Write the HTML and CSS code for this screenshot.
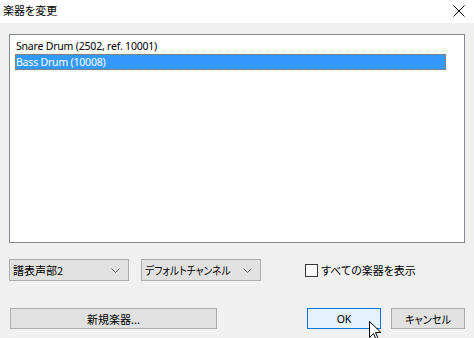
FILE: index.html
```html
<!DOCTYPE html>
<html lang="ja">
<head>
<meta charset="utf-8">
<link rel="stylesheet" href="styles.css">
</head>
<body>
<div class="dialog">
  <div class="titlebar">
    <span class="title">楽器を変更</span>
    <svg class="close" width="12" height="12" viewBox="0 0 12 12"><path d="M0.5 0.5 L11.5 11.5 M11.5 0.5 L0.5 11.5" stroke="#000" stroke-width="1" fill="none"/></svg>
  </div>
  <div class="body">
    <div class="listbox">
      <div class="item">Snare Drum (2502, ref. 10001)</div>
      <div class="item selected">Bass Drum (10008)</div>
    </div>
    <div class="controls">
      <div class="combo combo-staff"><span>譜表声部2</span><svg class="chev" width="9" height="5" viewBox="0 0 9 5"><path d="M0.5 0.5 L4.5 4.5 L8.5 0.5" stroke="#606060" fill="none"/></svg></div>
      <div class="combo combo-channel"><span class="narrow">デフォルトチャンネル</span><svg class="chev" width="9" height="5" viewBox="0 0 9 5"><path d="M0.5 0.5 L4.5 4.5 L8.5 0.5" stroke="#606060" fill="none"/></svg></div>
      <label class="check"><span class="box"></span><span>すべての楽器を表示</span></label>
    </div>
    <div class="buttons">
      <div class="btn btn-new">新規楽器...</div>
      <div class="btn btn-ok">OK</div>
      <div class="btn btn-cancel"><span class="narrow-c">キャンセル</span></div>
    </div>
  </div>
  <svg class="cursor" width="14" height="20" viewBox="0 0 14 20"><path d="M0.5 0.5 L0.5 16.5 L4.5 12.5 L7.5 19.5 L9.5 18.5 L6.5 11.5 L12 11.5 Z" fill="#fff" stroke="#000" stroke-width="1"/></svg>
</div>
</body>
</html>
```
FILE: styles.css
```css
html, body {
  margin: 0;
  padding: 0;
}
body {
  background: #f0f0f0;
  font-family: "Noto Sans CJK JP", sans-serif;
  font-size: 11px;
  font-feature-settings: "palt";
  color: #000;
  width: 474px;
  height: 338px;
  overflow: hidden;
}
.dialog {
  position: relative;
  width: 474px;
  height: 338px;
}
.titlebar {
  height: 23px;
  background: #fff;
  display: flex;
  align-items: center;
  justify-content: space-between;
  padding: 0 9px 0 3px;
  box-sizing: border-box;
}
.title {
  font-size: 11px;
  line-height: 23px;
  margin-top: -3px;
}
.close {
  display: block;
  margin-top: -2px;
}
.body {
  padding: 11px 9px 0 9px;
}
.listbox {
  width: 456px;
  height: 209px;
  box-sizing: border-box;
  border: 1px solid #828790;
  background: #fff;
  padding: 3px 18px 0 5px;
  font-family: "Noto Sans", sans-serif;
  font-size: 10.5px;
  letter-spacing: -0.2px;
  font-feature-settings: normal;
}
.item {
  height: 16px;
  line-height: 16px;
  padding-left: 1px;
  white-space: nowrap;
}
.item.selected {
  background: #3399ff;
  color: #fff;
  outline: 1px dotted #c86a2a;
  outline-offset: -1px;
}
.controls {
  display: flex;
  align-items: center;
  margin-top: 16px;
  height: 22px;
}
.combo {
  height: 22px;
  box-sizing: border-box;
  border: 1px solid #adadad;
  background: #e1e1e1;
  display: flex;
  align-items: center;
  justify-content: space-between;
  padding: 0 8px 0 3px;
  white-space: nowrap;
}
.combo-staff {
  width: 120px;
}
.combo-channel {
  width: 120px;
  margin-left: 12px;
}
.narrow {
  display: inline-block;
  width: 92px;
  transform: scaleX(0.89);
  transform-origin: left center;
}
.narrow-c {
  display: inline-block;
  transform: scaleX(0.92);
}
.chev {
  display: block;
}
.check {
  display: flex;
  align-items: center;
  margin-left: 44px;
}
.box {
  width: 13px;
  height: 13px;
  box-sizing: border-box;
  border: 1px solid #333;
  background: #fff;
  margin-right: 3px;
}
.buttons {
  display: flex;
  margin-top: 27px;
  padding-left: 1px;
}
.btn {
  height: 21px;
  box-sizing: border-box;
  border: 1px solid #adadad;
  background: #e1e1e1;
  display: flex;
  align-items: center;
  justify-content: center;
}
.btn-new {
  width: 207px;
}
.btn-ok {
  width: 74px;
  margin-left: 90px;
  background: #e5f1fb;
  border-color: #0078d7;
  font-family: "Noto Sans", sans-serif;
  font-size: 10.5px;
}
.btn-cancel {
  width: 74px;
  margin-left: 10px;
}
.cursor {
  position: absolute;
  left: 369px;
  top: 321px;
}
```
